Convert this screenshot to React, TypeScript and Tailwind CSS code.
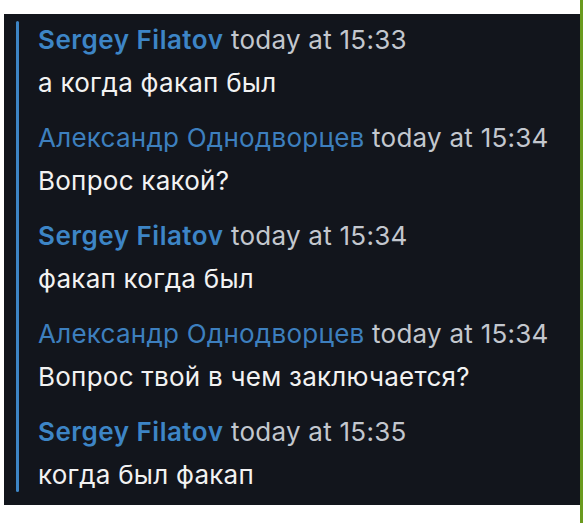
const messages = [
  { author: 'Sergey Filatov', bold: true, time: 'today at 15:33', text: 'а когда факап был' },
  { author: 'Александр Однодворцев', bold: false, time: 'today at 15:34', text: 'Вопрос какой?' },
  { author: 'Sergey Filatov', bold: true, time: 'today at 15:34', text: 'факап когда был' },
  { author: 'Александр Однодворцев', bold: false, time: 'today at 15:34', text: 'Вопрос твой в чем заключается?' },
  { author: 'Sergey Filatov', bold: true, time: 'today at 15:35', text: 'когда был факап' },
];

export default function App() {
  return (
    <div className="flex h-[523px] w-[588px] bg-white" style={{ fontFamily: 'Inter, "Noto Sans", sans-serif' }}>
      <div className="flex w-[580px] flex-col pt-[14px]">
        <div className="ml-[4px] flex h-[491px] bg-[#12151c]">
          {/* quote bar */}
          <div className="ml-[12px] mt-[7px] mb-[13px] w-[3px] rounded-full bg-[#3d85c6]" />
          <div className="ml-[19px] flex flex-col gap-[12px] pt-[4px]">
            {messages.map((m, i) => (
              <div key={i} className="text-[26px] leading-[43px] tracking-[0.25px]">
                <div className="whitespace-nowrap">
                  <span className={m.bold ? 'font-semibold tracking-[0.5px] text-[#3d85c6]' : 'font-normal text-[#3d7fbe]'}>{m.author}</span>
                  <span className="text-[#c3c7ce]"> {m.time}</span>
                </div>
                <div className="whitespace-nowrap text-[#f2f2f2]">{m.text}</div>
              </div>
            ))}
          </div>
        </div>
      </div>
      <div className="w-[3px] bg-[#6a9a1e]" />
    </div>
  );
}
